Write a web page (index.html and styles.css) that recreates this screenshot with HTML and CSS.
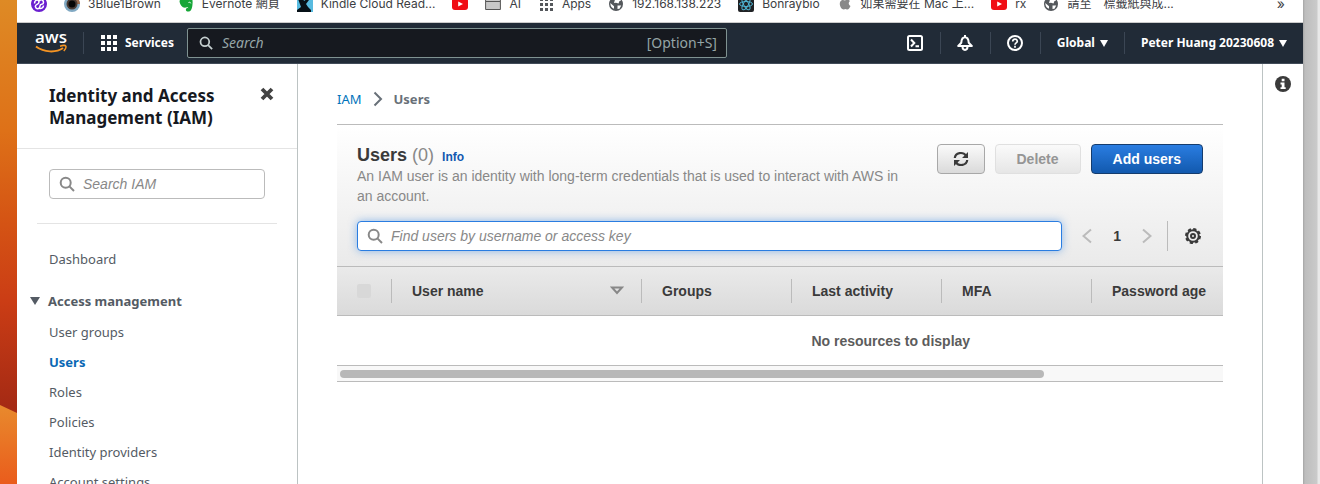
FILE: index.html
```html
<!DOCTYPE html>
<html lang="en">
<head>
<meta charset="utf-8">
<title>IAM - Users</title>
<link rel="stylesheet" href="styles.css">
</head>
<body>
<svg class="defs" aria-hidden="true">
  <symbol id="search" viewBox="0 0 16 16"><g fill="none" stroke="currentColor" stroke-width="2"><circle cx="6.7" cy="6.7" r="5"/><path d="M10.4 10.4 15 15"/></g></symbol>
  <symbol id="youtube" viewBox="0 0 16 16"><rect y="2" width="16" height="12" rx="3" fill="#f00d14"/><path d="M6.2 5.4 11 8l-4.800 2.600z" fill="#fff"/></symbol>
  <symbol id="globe" viewBox="0 0 16 16"><circle cx="8" cy="8" r="7" fill="#54585c"/><path d="M2.300 7 6 10.200v2.600c-2-.6-3.700-2.600-3.700-5.800zM7 3.500l3-1.700 3.200 3-1.700.2-1 2.500-2.500-.8-2 .3zM9.500 9.500h3.700l-1.700 3.200-2 .3z" fill="#fff"/></symbol>
</svg>
<div class="desktop">
  <svg class="wallpaper" viewBox="0 0 17 484" preserveAspectRatio="none" aria-hidden="true">
    <defs>
      <linearGradient id="sky" x1="0" y1="0" x2="0" y2="1"><stop offset="0" stop-color="#de8a25"/><stop offset=".27" stop-color="#de7118"/><stop offset=".45" stop-color="#d55514"/><stop offset=".62" stop-color="#cb3d15"/><stop offset=".84" stop-color="#a52a14"/></linearGradient>
      <linearGradient id="dune" x1="0" y1="0" x2="0" y2="1"><stop offset="0" stop-color="#e88a2d"/><stop offset="1" stop-color="#ea5c1c"/></linearGradient>
    </defs>
    <path d="M0 0h17v484H0z" fill="url(#sky)"/><path d="M0 405 17 413v71H0z" fill="url(#dune)"/>
  </svg>
  <div class="window">
    <nav class="bookmarks" aria-label="Bookmarks">
      <a href="#" aria-label="Bookmark"><svg viewBox="0 0 16 16"><circle cx="8" cy="8" r="8" fill="#6a1fd0"/><path d="M3.500 7.500C3.500 3.500 8 3 8 6S3.500 8 4.500 11s4.500 2 4.500-1 3.500-.5 3.500-3.500S9 3 8.500 5M8.500 12.500c2 .5 4-1 4-3" fill="none" stroke="#fff" stroke-width="1.500"/></svg></a>
      <a href="#"><svg viewBox="0 0 16 16"><circle cx="8" cy="8" r="8" fill="#81a9c3"/><path d="M8 8V0a8 8 0 0 1 8 8z" fill="#9a6a4b"/><circle cx="8" cy="8" r="5.500" fill="#4a3a33"/><circle cx="8" cy="8" r="3.500" fill="#050505"/></svg>3Blue1Brown</a>
      <a href="#"><svg viewBox="0 0 16 16"><path d="M2 4 6 0h5c3 1 4 4 3.500 8-.2 4-1.200 7-3.500 7.500-2.500.5-3.500-1-3-2.500.4-1.200 2-1 2.500-.5-.5-2-2.500-1-3.500-.8C4 11.500 2 9 1.500 5z" fill="#16a637"/><path d="M10.500 6.500c1-.5 2-.2 2.300.8" fill="none" stroke="#fff" stroke-width="1"/></svg>Evernote 網頁</a>
      <a href="#"><svg viewBox="0 0 16 16"><path d="M0 0h16v16H0z" fill="#58bbe0"/><path d="M0 0h5l2 5 3-2 2 1-3 4 2 3 3 3v2H0v-2l4-3z" fill="#071118"/></svg>Kindle Cloud Read...</a>
      <a href="#" aria-label="YouTube"><svg><use href="#youtube"/></svg></a>
      <a href="#"><svg viewBox="0 0 16 16"><path d="M.6 2.500h14.800v11H.6z" fill="#c8c8c8" stroke="#555"/><path d="M1 5.500h14" stroke="#555"/></svg>AI</a>
      <a href="#"><svg viewBox="0 0 16 16" fill="#55585c"><path d="M2 2h3v3H2zm5 0h3v3H7zm5 0h3v3h-3zM2 7h3v3H2zm5 0h3v3H7zm5 0h3v3h-3zM2 12h3v3H2zm5 0h3v3H7zm5 0h3v3h-3z"/></svg>Apps</a>
      <a href="#"><svg><use href="#globe"/></svg>192.168.138.223</a>
      <a href="#"><svg viewBox="0 0 16 16"><rect width="16" height="16" rx="2" fill="#202225"/><g fill="none" stroke="#4fb5d3"><ellipse cx="8" cy="8" rx="6.500" ry="2.500"/><ellipse cx="8" cy="8" rx="6.500" ry="2.500" transform="rotate(60 8 8)"/><ellipse cx="8" cy="8" rx="6.500" ry="2.500" transform="rotate(120 8 8)"/></g></svg>Bonraybio</a>
      <a href="#"><svg viewBox="0 0 16 16"><path d="M8 4.500C9.500 3.300 12 3.500 13 5c-2 1.500-1.500 4 .5 5-.8 2-2 3.700-3.500 3.500-1.300-.7-2-.7-3.200 0C4 13.500 1.500 8 3.500 5.300 4.700 3.700 6.500 3.800 8 4.500zM8 3.500c0-1.700 1-2.700 2.500-3C10.600 2.200 9.500 3.500 8 3.500z" fill="#888"/></svg>如果需要在 Mac 上...</a>
      <a href="#"><svg><use href="#youtube"/></svg>rx</a>
      <a href="#"><svg><use href="#globe"/></svg>請至　標籤紙與成...</a>
      <button class="more" aria-label="More bookmarks">»</button>
    </nav>

    <header class="topbar">
      <a class="aws" href="#" aria-label="AWS home"><svg viewBox="0 0 32 22"><text x="0" y="11" class="aws-word">aws</text><path d="M1 14.500c8 6 20 6.500 27 1.500" fill="none" stroke="#f59423" stroke-width="2"/><path d="M25 14.200c3-1 5.500-.7 5.800-.1.400.9-.5 3.400-2 5" fill="none" stroke="#f59423" stroke-width="1.500"/></svg></a>
      <button class="services"><svg viewBox="0 0 16 16" fill="currentColor"><path d="M0 0h4v4H0zm6 0h4v4H6zm6 0h4v4h-4zM0 6h4v4H0zm6 0h4v4H6zm6 0h4v4h-4zM0 12h4v4H0zm6 0h4v4H6zm6 0h4v4h-4z"/></svg>Services</button>
      <label class="global-search"><svg><use href="#search"/></svg><input type="search" placeholder="Search" aria-label="Search"><span>[Option+S]</span></label>
      <div class="tools">
        <button aria-label="CloudShell"><svg viewBox="0 0 16 16" fill="none" stroke="currentColor" stroke-width="2"><rect x="1" y="1" width="14" height="14" rx="1.500"/><path d="M4 4.500 7.300 8 4 11.500M8.500 11.200H12"/></svg></button>
        <button aria-label="Notifications"><svg viewBox="0 0 16 16" fill="none" stroke="currentColor" stroke-width="2"><path d="M1.200 11 4.300 7.800C4.500 4 6 2.300 8 2.300s3.500 1.700 3.700 5.500l3.100 3.200zM8 0v2M5.500 11.500c0 4.500 5 4.500 5 0" stroke-linejoin="round"/></svg></button>
        <button aria-label="Help"><svg viewBox="0 0 16 16" fill="none" stroke="currentColor" stroke-width="2"><circle cx="8" cy="8" r="7"/><path d="M5.700 6.500C5.700 3.300 10.300 3.500 10.300 6.300 10.300 8 8 7.800 8 9.700M8 10.800v2" stroke-width="1.700"/></svg></button>
        <button class="region">Global<i class="caret"></i></button>
        <button class="account">Peter Huang 20230608<i class="caret"></i></button>
      </div>
    </header>

    <div class="body">
      <aside class="sidebar">
        <div class="side-head"><h2>Identity and Access Management (IAM)</h2><button aria-label="Close navigation"><svg viewBox="0 0 14 14"><path d="m2 2 10 10M12 2 2 12" stroke="#424242" stroke-width="3.800"/></svg></button></div>
        <div class="side-search"><label class="field"><svg><use href="#search"/></svg><input type="search" placeholder="Search IAM" aria-label="Search IAM"></label></div>
        <nav class="menu" aria-label="IAM">
          <a href="#">Dashboard</a>
          <button class="group"><i class="caret"></i>Access management</button>
          <a href="#">User groups</a>
          <a href="#" class="current" aria-current="page">Users</a>
          <a href="#">Roles</a>
          <a href="#">Policies</a>
          <a href="#">Identity providers</a>
          <a href="#">Account settings</a>
        </nav>
      </aside>
      <main>
        <nav class="crumbs" aria-label="Breadcrumb"><a href="#">IAM</a><svg viewBox="0 0 10 16"><path d="m1.500 1.500 6.500 6.500-6.500 6.500" fill="none" stroke="#687078" stroke-width="2"/></svg><b>Users</b></nav>
        <section class="panel">
          <div class="panel-head">
            <div class="title-row">
              <div class="title">
                <div class="heading"><h1>Users <span>(0)</span></h1><a href="#">Info</a></div>
                <p>An IAM user is an identity with long-term credentials that is used to interact with AWS in an account.</p>
              </div>
              <div class="actions">
                <button class="btn" aria-label="Refresh"><svg viewBox="0 0 16 16"><g fill="none" stroke="#3a3a3a" stroke-width="2.200"><path d="M1.800 7C2.300 1.500 10 .3 13 4.700M14.200 9C13.700 14.500 6 15.700 3 11.300"/></g><path d="M15 1v6H9zM1 15V9h6z" fill="#3a3a3a"/></svg></button>
                <button class="btn off" disabled>Delete</button>
                <button class="btn primary">Add users</button>
              </div>
            </div>
            <div class="filter-row">
              <label class="field focused"><svg><use href="#search"/></svg><input type="search" placeholder="Find users by username or access key" aria-label="Find users"></label>
              <div class="pager">
                <button aria-label="Previous page"><svg viewBox="0 0 10 16"><path d="M9 1.500 1.500 8 9 14.500"/></svg></button>
                <b>1</b>
                <button aria-label="Next page"><svg viewBox="0 0 10 16"><path d="M1 1.500 8.500 8 1 14.500"/></svg></button>
              </div>
              <button class="gear" aria-label="Preferences"><svg viewBox="0 0 16 16" fill="none" stroke="#3a3a3a"><circle cx="8" cy="8" r="7" stroke-width="2" stroke-dasharray="3.200 2.300"/><circle cx="8" cy="8" r="5.800" stroke-width="2"/><circle cx="8" cy="8" r="2" stroke-width="2"/></svg></button>
            </div>
          </div>
          <div class="table-view">
            <table>
              <colgroup><col class="c-check"><col class="c-name"><col class="c-std"><col class="c-std"><col class="c-std"><col></colgroup>
              <thead><tr>
                <th><div><input type="checkbox" disabled aria-label="Select all"></div></th>
                <th><div>User name<svg viewBox="0 0 14 10"><path d="M2 1.500h10L7 7z" fill="none" stroke="#888" stroke-width="2"/></svg></div></th>
                <th><div>Groups</div></th><th><div>Last activity</div></th><th><div>MFA</div></th><th><div>Password age</div></th>
              </tr></thead>
              <tbody><tr><td colspan="6">No resources to display</td></tr></tbody>
            </table>
          </div>
          <div class="scroll-track"><div class="scroll-thumb"></div></div>
        </section>
      </main>
      <aside class="rail"><button aria-label="Open help panel"><svg viewBox="0 0 16 16"><circle cx="8" cy="8" r="8" fill="#3a3a3a"/><path d="M6.700 2.700h2.800v2.500H6.700zM5.500 6.500h4v4.700h1.200v1.900H5.500v-1.900h1.200V8.400H5.500z" fill="#fff"/></svg></button></aside>
    </div>
  </div>
  <div class="behind"></div>
</div>
</body>
</html>
```
FILE: styles.css
```css
* { box-sizing: border-box; }
body { margin: 0; height: 100vh; overflow: hidden; background: #fff; font: 14px/20px "Liberation Sans", Arial, sans-serif; color: #3a3a3a; }
button, input { font: inherit; color: inherit; margin: 0; padding: 0; border: 0; background: none; }
button { cursor: pointer; display: flex; align-items: center; justify-content: center; }
a { text-decoration: none; color: inherit; }
svg { display: block; flex: none; width: 16px; height: 16px; }
h1, h2, p { margin: 0; }
input { outline: none; min-width: 0; appearance: none; }
.defs { display: none; }

.desktop { display: grid; grid-template-columns: 17px minmax(0, 1fr) 17px; height: 100vh; }
.wallpaper { width: 100%; height: 100%; }
.behind { background: linear-gradient(90deg, #a5a5a5 0, #bdbdbd 2px, #cacaca 14px, #e8e8e8 15px); }
.window { display: flex; flex-direction: column; min-height: 0; background: #fff; }

.bookmarks { display: flex; align-items: flex-end; gap: 17px; flex: none; height: 23px; padding: 0 18px 10px 14px; border-bottom: 1px solid #ccc; overflow: hidden; white-space: nowrap; font: 12px/16px Inter, "Noto Sans CJK TC", sans-serif; color: #3c4043; }
.bookmarks a { display: flex; gap: 8px; height: 16px; }
.more { margin-left: auto; font-size: 14px; }

.topbar { display: flex; align-items: center; flex: none; height: 41px; background: #212b37; border-bottom: 1px solid #414b58; color: #fff; font: bold 12px/20px "Noto Sans", sans-serif; }
.aws { padding: 0 16px 0 18px; border-right: 1px solid #3b4654; }
.aws svg { width: 32px; height: 22px; }
.aws-word { font: 600 17px "Open Sans", sans-serif; fill: #fff; }
.services { gap: 8px; padding: 0 13px 0 17px; }
.global-search { display: flex; align-items: center; flex: 0 1 540px; height: 30px; padding: 0 9px 0 11px; gap: 9px; border: 1px solid #7f9291; border-radius: 2px; background: #16191f; font-weight: normal; font-size: 14px; color: #95a5a6; }
.global-search svg { width: 14px; height: 14px; color: #c5cfcf; }
.global-search input { flex: 1; font-style: italic; }
.global-search input::placeholder { color: #95a5a6; }
.tools { display: flex; margin-left: auto; }
.tools button { width: 50px; height: 22px; border-left: 1px solid #3b4654; }
.tools button:first-child { border-left: 0; }
.tools .region, .tools .account { width: auto; padding: 0 16px; gap: 5px; white-space: nowrap; }
.caret { border: 4px solid transparent; border-top: 7px solid currentColor; border-bottom: 0; }

.body { display: grid; grid-template-columns: 281px minmax(0, 1fr) 41px; flex: 1; min-height: 0; }
.sidebar { border-right: 1px solid #bcc3c3; overflow: hidden; font-family: "Noto Sans", sans-serif; }
.side-head { display: flex; align-items: flex-start; justify-content: space-between; padding: 21px 23px 19px 32px; border-bottom: 1px solid #e4e4e4; }
.side-head h2 { max-width: 190px; font-size: 17px; line-height: 22px; color: #16191f; }
.side-head svg { width: 14px; height: 14px; margin-top: 2px; }
.side-search { margin: 0 20px; padding: 20px 12px 24px; border-bottom: 1px solid #e4e4e4; }
.field { display: flex; align-items: center; gap: 8px; height: 30px; padding: 0 9px; border: 1px solid #bbb; border-radius: 4px; background: #fff; color: #888; font-family: "Liberation Sans", Arial, sans-serif; }
.field input { flex: 1; font-style: italic; }
.field input::placeholder { color: #888; }
.menu { display: flex; flex-direction: column; align-items: flex-start; gap: 10px; padding: 25px 12px 0; color: #545b64; font-size: 13px; }
.menu a { padding-left: 20px; }
.menu .group { gap: 8px; margin-top: 12px; padding: 0 0 1px 1px; font-weight: bold; }
.menu .caret { border-width: 8px 5px 0; }
.menu .current { color: #0a68b4; font-weight: bold; }

main { padding: 25px 39px 0; min-width: 0; }
.crumbs { display: flex; align-items: center; gap: 11px; padding-bottom: 15px; font: 13px/20px "Noto Sans", sans-serif; color: #687078; }
.crumbs a { color: #0073bb; }
.crumbs svg { width: 10px; }
.panel { border-top: 1px solid #bbb; }
.panel-head { padding: 19px 20px 15px; background: linear-gradient(#fff, #eaeaea); }
.title-row { display: flex; justify-content: space-between; align-items: flex-start; gap: 20px; }
.title { max-width: 560px; }
.heading { display: flex; align-items: baseline; gap: 8px; height: 22px; }
.heading h1 { font-size: 18px; line-height: 22px; }
.heading span { font-weight: normal; color: #888; }
.heading a { font-size: 12px; font-weight: bold; color: #1259b0; }
.title p { color: #888; }
.actions { display: flex; gap: 10px; }
.btn { height: 30px; padding: 0 20px; border: 1px solid #a8a8a8; border-radius: 4px; background: linear-gradient(#fafafa, #dadada); font-weight: bold; white-space: nowrap; }
.btn svg { margin: 0 -5px; }
.btn:first-child { width: 48px; }
.btn.off { padding: 0 21px; border-color: #e0e0e0; background: linear-gradient(#fafafa, #e6e6e6); color: #959595; }
.btn.primary { padding: 0 21px; border-color: #153c6d; background: linear-gradient(#2a7de1, #1259ae); color: #fff; }
.filter-row { display: flex; align-items: center; margin-top: 15px; }
.focused { flex: 1; border-color: #2a7de1; box-shadow: 0 0 8px #2a7de180; }
.pager { display: flex; align-items: center; gap: 21px; padding: 0 15px 0 20px; font-size: 14px; }
.pager svg { width: 10px; fill: none; stroke: #bbb; stroke-width: 2; }
.gear { height: 30px; padding: 0 2px 0 17px; border-left: 1px solid #bbb; }
.table-view { overflow: hidden; }
table { width: 125%; border-collapse: separate; border-spacing: 0; table-layout: fixed; }
.c-check { width: 55px; }
.c-name { width: 250px; }
.c-std { width: 150px; }
th { height: 50px; padding: 0; border: solid #bbb; border-width: 1px 0; background: linear-gradient(#eaeaea, #dadada); text-align: left; }
th div { display: flex; align-items: center; justify-content: space-between; height: 24px; padding: 0 17px 0 20px; border-right: 1px solid #bbb; }
th svg { width: 14px; height: 10px; }
th input { width: 14px; height: 14px; border-radius: 2px; background: #d8d8d8; }
td { height: 49px; padding: 0; text-align: center; font-weight: bold; color: #5c5c5c; }
.scroll-track { padding: 4px 3px 3px; border: solid #bbb; border-width: 1px 0; background: #f8f8f8; }
.scroll-thumb { width: 80%; height: 8px; border-radius: 4px; background: #b8b8b8; }
.rail { display: flex; justify-content: center; align-items: flex-start; padding-top: 12px; border-left: 1px solid #bcc3c3; }
```
